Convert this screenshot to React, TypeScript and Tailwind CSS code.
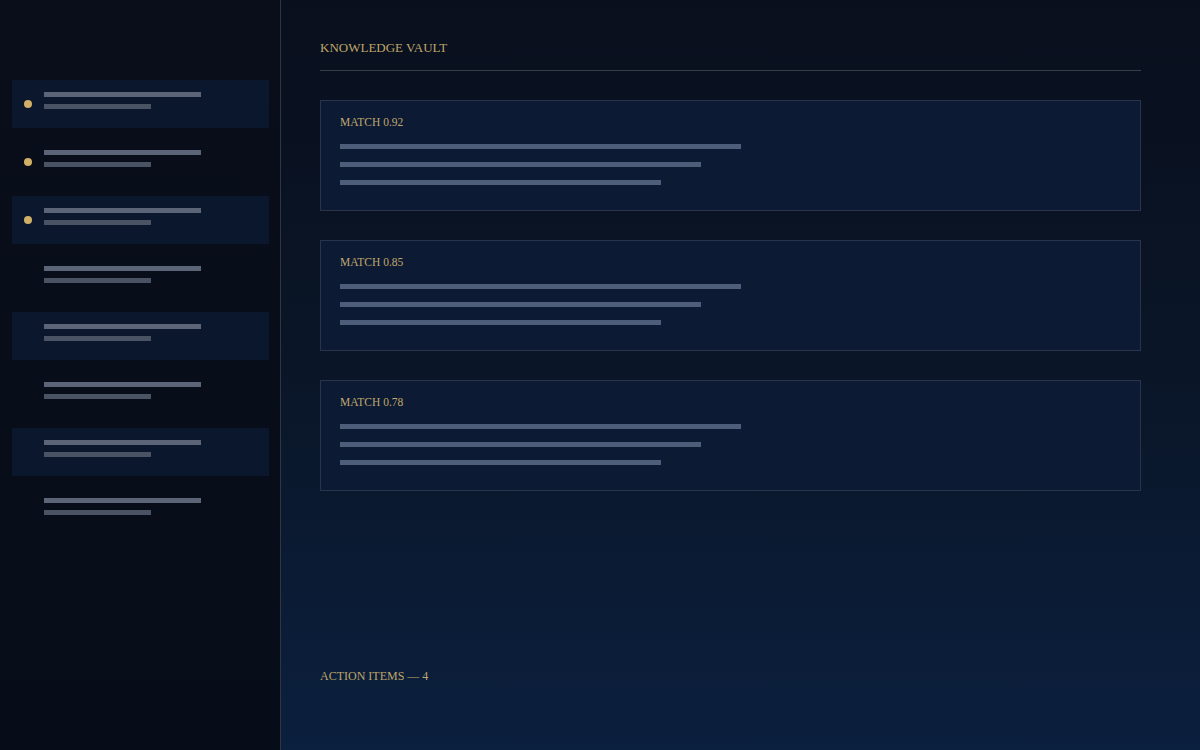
const serif = { fontFamily: '"Liberation Serif", "Times New Roman", serif' }

const threads = [
  { active: true, dot: true },
  { active: false, dot: true },
  { active: true, dot: true },
  { active: false, dot: false },
  { active: true, dot: false },
  { active: false, dot: false },
  { active: true, dot: false },
  { active: false, dot: false },
]

const matches = ['0.92', '0.85', '0.78']

function ThreadRow({ active, dot }: { active: boolean; dot: boolean }) {
  return (
    <div className={`h-12 flex items-center gap-3 px-3 ${active ? 'bg-[#0a172c]' : ''}`}>
      <span className={`w-2 h-2 rounded-full shrink-0 ${dot ? 'bg-[#d1b066]' : 'bg-transparent'}`} />
      <div className="flex flex-col gap-[7px] pb-[7px]">
        <div className="h-[5px] w-[157px] bg-[#5b6577]" />
        <div className="h-[5px] w-[107px] bg-[#4a5364]" />
      </div>
    </div>
  )
}

function MatchCard({ score }: { score: string }) {
  return (
    <div className="border border-[#29344a] bg-[#0c1a34] pl-[19px] pr-5 pt-[15px] pb-[25px]">
      <div className="text-[11.5px] leading-[13px] text-[#c0a76c]" style={serif}>
        MATCH {score}
      </div>
      <div className="mt-[15px] flex flex-col gap-[13px]">
        <div className="h-[5px] w-[401px] bg-[#4e5d7a]" />
        <div className="h-[5px] w-[361px] bg-[#4e5d7a]" />
        <div className="h-[5px] w-[321px] bg-[#4e5d7a]" />
      </div>
    </div>
  )
}

export default function App() {
  return (
    <div className="w-[1200px] h-[750px] flex bg-gradient-to-b from-[#090f1d] via-[#0a1628] to-[#0b1f3e] overflow-hidden">
      <aside className="w-[281px] shrink-0 border-r border-[#2f3541] bg-gradient-to-b from-[#090e1a] to-[#060c18] pt-20 pl-3 pr-[11px]">
        <div className="flex flex-col gap-[10px]">
          {threads.map((t, i) => (
            <ThreadRow key={i} active={t.active} dot={t.dot} />
          ))}
        </div>
      </aside>

      <main className="flex-1 flex flex-col pl-[39px] pr-[59px] pt-10">
        <div className="border-b border-[#383e47] pb-[14px]">
          <h1 className="text-[13px] leading-4 text-[#bfa56b]" style={serif}>
            KNOWLEDGE VAULT
          </h1>
        </div>

        <div className="mt-[29px] flex flex-col gap-[29px]">
          {matches.map((m) => (
            <MatchCard key={m} score={m} />
          ))}
        </div>

        <div className="mt-[178px] text-[12px] leading-[14px] text-[#bfa56b]" style={serif}>
          ACTION ITEMS — 4
        </div>
      </main>
    </div>
  )
}
